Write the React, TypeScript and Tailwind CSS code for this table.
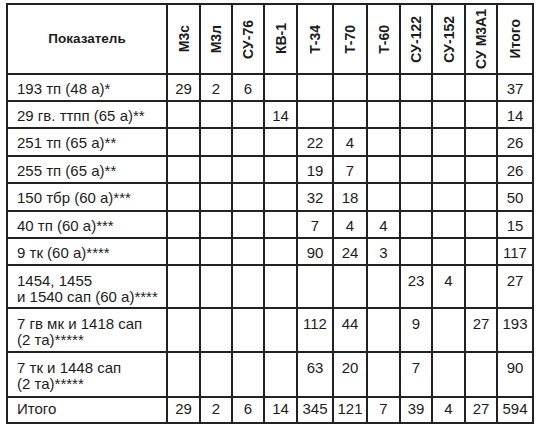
const cols = ['М3с', 'М3л', 'СУ-76', 'КВ-1', 'Т-34', 'Т-70', 'Т-60', 'СУ-122', 'СУ-152', 'СУ М3А1', 'Итого'];

type Row = { label: string[]; values: string[]; pad: string };

const rows: Row[] = [
  { label: ['193 тп (48 а)*'], values: ['29', '2', '6', '', '', '', '', '', '', '', '37'], pad: 'pt-[6px]' },
  { label: ['29 гв. ттпп (65 а)**'], values: ['', '', '', '14', '', '', '', '', '', '', '14'], pad: 'pt-[6px]' },
  { label: ['251 тп (65 а)**'], values: ['', '', '', '', '22', '4', '', '', '', '', '26'], pad: 'pt-[6px]' },
  { label: ['255 тп (65 а)**'], values: ['', '', '', '', '19', '7', '', '', '', '', '26'], pad: 'pt-[6px]' },
  { label: ['150 тбр (60 а)***'], values: ['', '', '', '', '32', '18', '', '', '', '', '50'], pad: 'pt-[6px]' },
  { label: ['40 тп (60 а)***'], values: ['', '', '', '', '7', '4', '4', '', '', '', '15'], pad: 'pt-[6px]' },
  { label: ['9 тк (60 а)****'], values: ['', '', '', '', '90', '24', '3', '', '', '', '117'], pad: 'pt-[6px]' },
  { label: ['1454, 1455', 'и 1540 сап (60 а)****'], values: ['', '', '', '', '', '', '', '23', '4', '', '27'], pad: 'pt-[7px]' },
  { label: ['7 гв мк и 1418 сап', '(2 та)*****'], values: ['', '', '', '', '112', '44', '', '9', '', '27', '193'], pad: 'pt-[7px]' },
  { label: ['7 тк и 1448 сап', '(2 та)*****'], values: ['', '', '', '', '63', '20', '', '7', '', '', '90'], pad: 'pt-[7px]' },
  { label: ['Итого'], values: ['29', '2', '6', '14', '345', '121', '7', '39', '4', '27', '594'], pad: 'pt-[3px]' },
];

export default function App() {
  return (
    <div className="w-[538px] h-[433px] bg-white pt-[3px] pl-[6px] font-['Liberation_Sans',Arial,sans-serif] text-[#1c1c1c]">
      <div className="grid w-fit grid-cols-[158px_31px_30px_30px_31px_34px_32px_31px_30px_31px_30px_34px] grid-rows-[68px_25px_25px_26px_25px_26px_25px_25px_41px_42px_43px_24px] gap-[2px] p-[2px] bg-[#222]">
        {/* header */}
        <div className="bg-white flex items-center justify-center text-[13.5px] font-bold">Показатель</div>
        {cols.map((c) => (
          <div key={c} className="bg-white flex items-center justify-center">
            <span className="[writing-mode:vertical-rl] rotate-180 text-[14px] font-bold leading-none whitespace-nowrap">
              {c}
            </span>
          </div>
        ))}

        {/* body */}
        {rows.map((r, i) => (
          <>
            <div key={'l' + i} className={`bg-white pl-[9px] text-[15px] leading-[16px] ${r.pad}`}>
              {r.label.map((t) => (
                <div key={t}>{t}</div>
              ))}
            </div>
            {r.values.map((v, j) => (
              <div key={i + '-' + j} className={`bg-white text-center text-[15px] leading-[16px] ${r.pad}`}>
                {v}
              </div>
            ))}
          </>
        ))}
      </div>
    </div>
  );
}
